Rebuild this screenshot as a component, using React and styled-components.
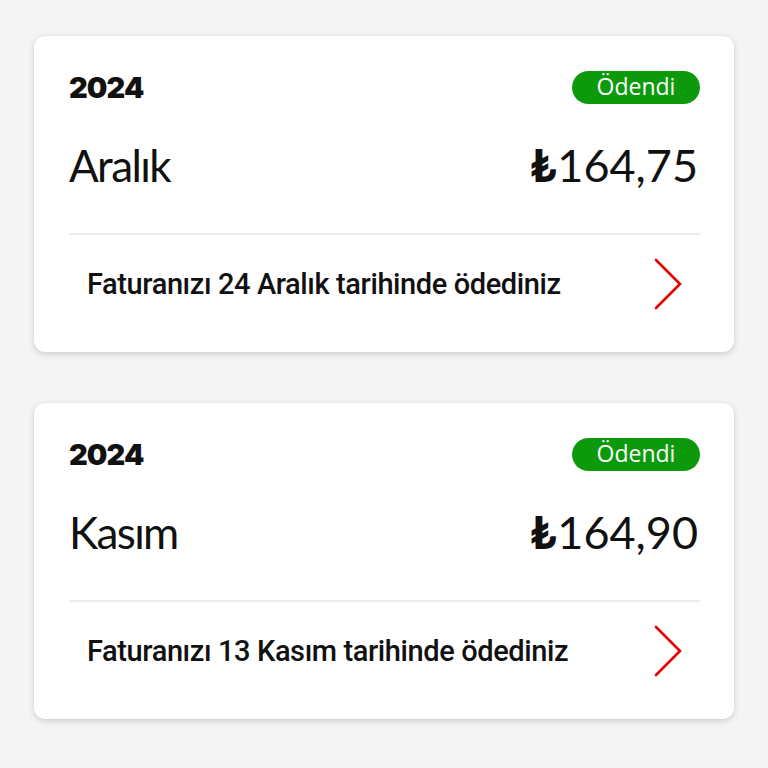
import styled, { createGlobalStyle } from "styled-components";

const GlobalStyle = createGlobalStyle`
  html, body {
    margin: 0;
    padding: 0;
    background: #f4f4f4;
  }
  body {
    font-family: "Lato", "Noto Sans", sans-serif;
    color: #111;
  }
`;

const bills = [
  { year: "2024", month: "Aralık", amount: "164,75", day: 24 },
  { year: "2024", month: "Kasım", amount: "164,90", day: 13 },
];

const Page = styled.div`
  display: flex;
  flex-direction: column;
  gap: 51px;
  padding: 36px 34px 0;
  width: 768px;
  height: 768px;
  box-sizing: border-box;
`;

const Card = styled.div`
  background: #fff;
  border-radius: 11px;
  box-shadow: 0 2px 6px rgba(0, 0, 0, 0.16), 0 0 1px rgba(0, 0, 0, 0.08);
  height: 316px;
  box-sizing: border-box;
  padding: 0 34px 0 35px;
  display: flex;
  flex-direction: column;
`;

const TopRow = styled.div`
  display: flex;
  justify-content: space-between;
  align-items: center;
  margin-top: 34px;
  height: 34px;
`;

const Year = styled.div`
  font-family: "Inter", sans-serif;
  font-weight: 900;
  font-size: 29px;
  letter-spacing: -0.9px;
`;

const Badge = styled.div`
  background: #0c9a0c;
  color: #fff;
  font-family: "Open Sans", sans-serif;
  font-size: 23px;
  line-height: 31px;
  height: 33px;
  width: 128px;
  text-align: center;
  border-radius: 17px;
`;

const MainRow = styled.div`
  display: flex;
  justify-content: space-between;
  align-items: baseline;
  margin-top: 34px;
  height: 64px;
`;

const Month = styled.div`
  font-family: "Lato", sans-serif;
  font-weight: 400;
  font-size: 44px;
  letter-spacing: -1.6px;
`;

const Amount = styled.div`
  font-family: "Lato", sans-serif;
  font-weight: 400;
  font-size: 45px;
  display: flex;
  align-items: baseline;
  margin-right: 2px;
`;

const Lira = styled.span`
  font-weight: 900;
  margin-right: 1px;
`;

const Divider = styled.div`
  height: 2px;
  background: #ececec;
  margin-top: 31px;
`;

const Footer = styled.div`
  flex: 1;
  display: flex;
  align-items: center;
  justify-content: space-between;
  padding: 0 17px 0 18px;
  margin-top: -20px;
`;

const FooterText = styled.div`
  font-family: "Roboto", sans-serif;
  font-weight: 500;
  font-size: 29px;
  letter-spacing: -0.4px;
`;

const Chevron = () => (
  <svg width="30" height="54" viewBox="0 0 30 54" fill="none">
    <path d="M3 3 L27 27 L3 51" stroke="#e60000" strokeWidth="2.6" strokeLinecap="round" strokeLinejoin="miter" />
  </svg>
);

export default function App() {
  return (
    <>
      <GlobalStyle />
      <Page>
        {bills.map((b) => (
          <Card key={b.month}>
            <TopRow>
              <Year>{b.year}</Year>
              <Badge>Ödendi</Badge>
            </TopRow>
            <MainRow>
              <Month>{b.month}</Month>
              <Amount>
                <Lira>₺</Lira>
                {b.amount}
              </Amount>
            </MainRow>
            <Divider />
            <Footer>
              <FooterText>
                Faturanızı {b.day} {b.month} tarihinde ödediniz
              </FooterText>
              <Chevron />
            </Footer>
          </Card>
        ))}
      </Page>
    </>
  );
}
